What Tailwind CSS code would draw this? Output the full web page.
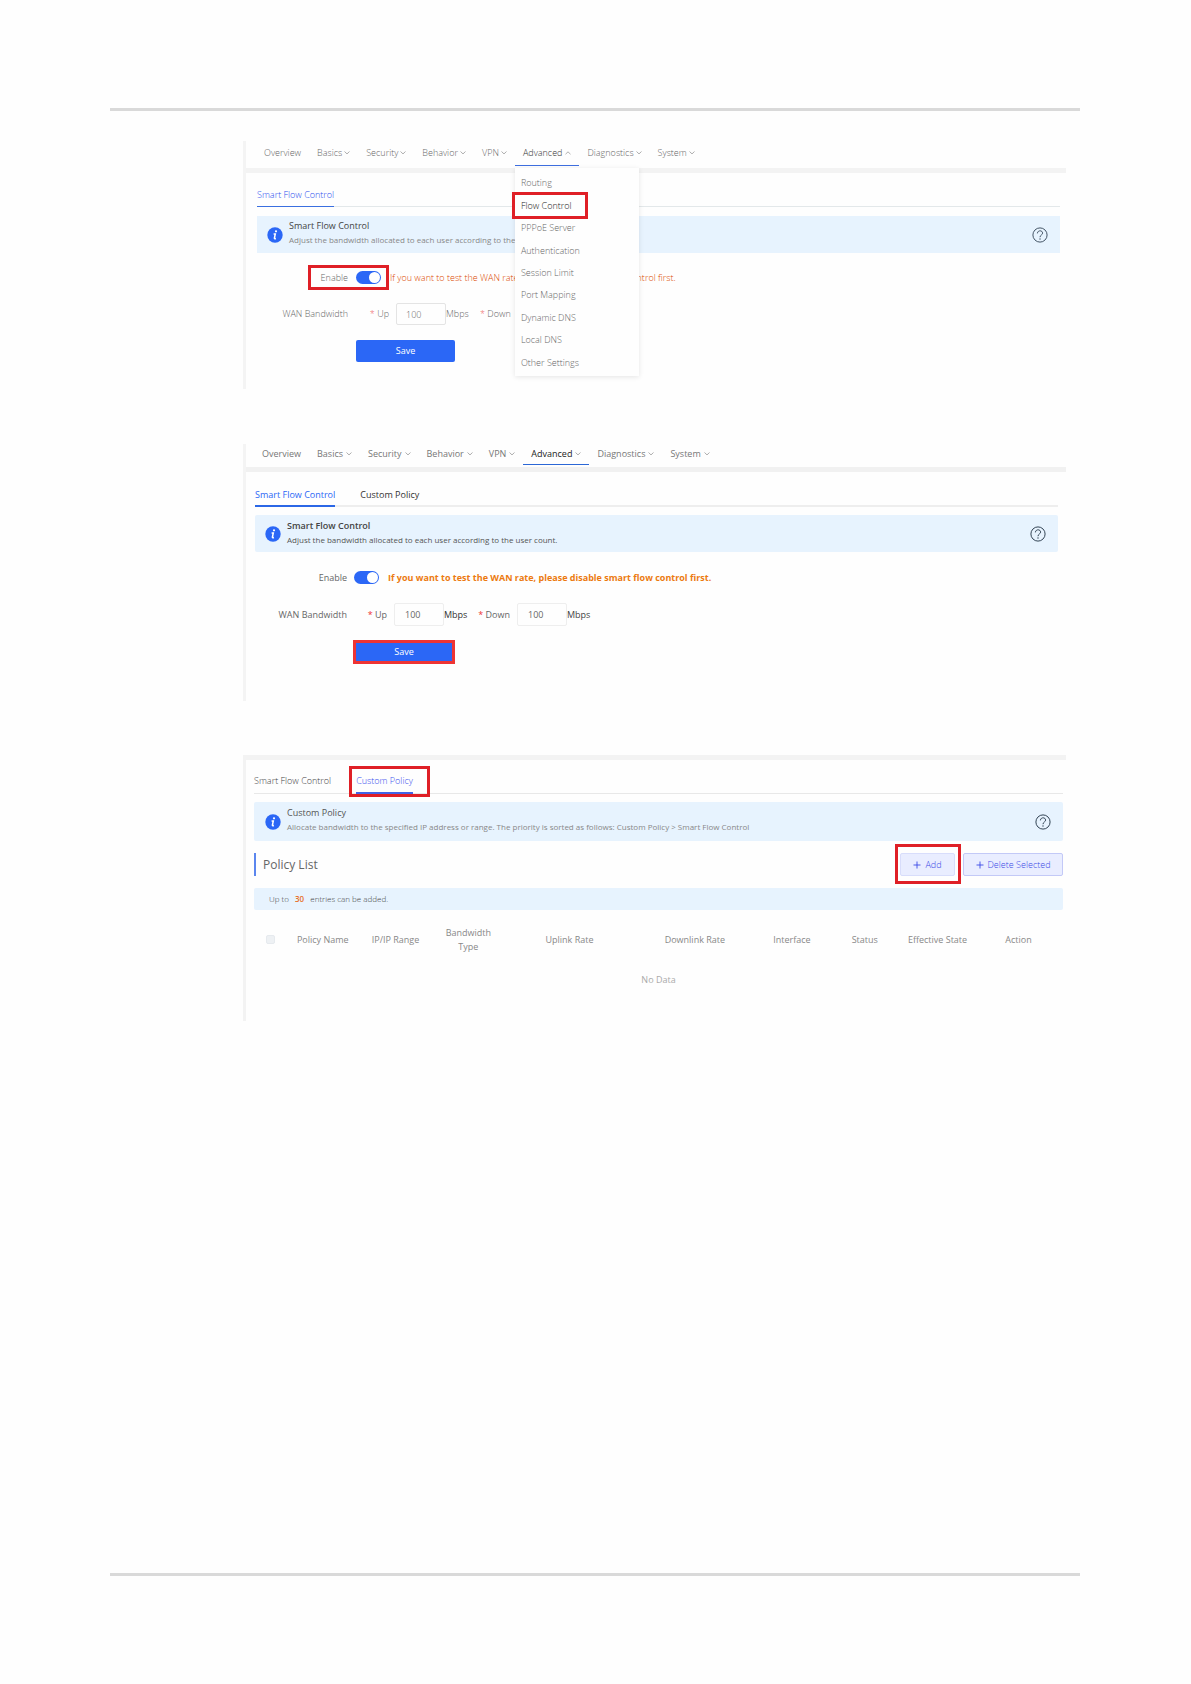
<!DOCTYPE html>
<html lang="en">
<head>
    <meta charset="UTF-8">
    <meta name="viewport" content="width=device-width, initial-scale=1.0">
    <title>Flow Control</title>
    <script src="https://cdn.jsdelivr.net/npm/@tailwindcss/browser@4"></script>
</head>
<body class="flex min-h-screen flex-col bg-[#fefefe] pt-[108px] pr-[111px] pb-[108px] pl-[110px] font-['Open_Sans',sans-serif] text-[9px] leading-3 text-[#666]">
    <svg class="hidden">
        <symbol id="down" viewBox="0 0 6 6"><path d="M.5 1.5 3 3.9 5.5 1.5" fill="none" stroke="#999" stroke-width=".8"/></symbol>
        <symbol id="up" viewBox="0 0 6 6"><path d="M.5 4.2 3 1.8 5.5 4.2" fill="none" stroke="#999" stroke-width=".8"/></symbol>
        <symbol id="plus" viewBox="0 0 8 8"><path d="M4 .5v7M.5 4h7" fill="none" stroke="currentColor" stroke-width=".9"/></symbol>
        <symbol id="info" viewBox="0 0 16 16">
            <circle cx="8" cy="8" r="7.7" fill="#2b67f6"/>
            <circle cx="9" cy="4.3" r="1.1" fill="#fff"/>
            <path d="M6.6 6.9h1.7L7.4 11.2q0 .8 1.5.3" fill="none" stroke="#fff" stroke-width="1.5"/>
        </symbol>
        <symbol id="help" viewBox="0 0 16 16">
            <circle cx="8" cy="8" r="7.1" fill="none" stroke="currentColor" stroke-width="1"/>
            <path d="M5.4 6.4C5.4 3 10.6 3 10.6 6.1 10.6 8 8 8 8 10.2" fill="none" stroke="currentColor" stroke-width="1"/>
            <circle cx="8" cy="12" r=".7" fill="currentColor"/>
        </symbol>
    </svg>

    <hr class="h-[3px] border-0 bg-[#d9d9d9]">

    <main class="mr-[14px] ml-[133px]">
        <!-- Step 1: open the menu -->
        <section class="mt-[30px] h-[248px] border-l-3 border-[#f4f4f4] font-light text-[#666]">
            <nav class="flex h-8 items-start border-b-5 border-[#f3f3f3] pl-[10px]">
                <a href="#" class="flex h-6 items-center px-2">Overview</a>
                <a href="#" class="flex h-6 items-center gap-[2px] px-2">Basics <svg class="size-[6px]"><use href="#down"/></svg></a>
                <a href="#" class="flex h-6 items-center gap-[2px] px-2">Security <svg class="size-[6px]"><use href="#down"/></svg></a>
                <a href="#" class="flex h-6 items-center gap-[2px] px-2">Behavior <svg class="size-[6px]"><use href="#down"/></svg></a>
                <a href="#" class="flex h-6 items-center gap-[2px] px-2">VPN <svg class="size-[6px]"><use href="#down"/></svg></a>
                <div class="relative">
                    <a href="#" class="flex h-[25px] items-center gap-[3px] border-b border-[#3f6fe0] px-2 text-[#333]">Advanced <svg class="size-[6px]"><use href="#up"/></svg></a>
                    <ul class="absolute top-[27px] left-0 z-10 flex h-[208px] w-[124px] flex-col bg-[#fefefe] pt-1 pb-[2px] shadow-[0_1px_5px_rgba(0,0,0,0.1)]">
                        <li class="flex flex-1 items-center px-[6px]"><a href="#">Routing</a></li>
                        <li class="relative flex flex-1 items-center px-[6px] text-[#222]"><a href="#">Flow Control</a><span class="absolute -top-[2px] -bottom-[2px] -left-[3px] w-[76px] border-3 border-[#df1f26]"></span></li>
                        <li class="flex flex-1 items-center px-[6px]"><a href="#">PPPoE Server</a></li>
                        <li class="flex flex-1 items-center px-[6px]"><a href="#">Authentication</a></li>
                        <li class="flex flex-1 items-center px-[6px]"><a href="#">Session Limit</a></li>
                        <li class="flex flex-1 items-center px-[6px]"><a href="#">Port Mapping</a></li>
                        <li class="flex flex-1 items-center px-[6px]"><a href="#">Dynamic DNS</a></li>
                        <li class="flex flex-1 items-center px-[6px]"><a href="#">Local DNS</a></li>
                        <li class="flex flex-1 items-center px-[6px]"><a href="#">Other Settings</a></li>
                    </ul>
                </div>
                <a href="#" class="flex h-6 items-center gap-[2px] px-2">Diagnostics <svg class="size-[6px]"><use href="#down"/></svg></a>
                <a href="#" class="flex h-6 items-center gap-[2px] px-2">System <svg class="size-[6px]"><use href="#down"/></svg></a>
            </nav>
            <div class="mr-[6px] ml-[11px]">
                <div class="flex h-[34px] items-end border-b border-[#e3e8ea]">
                    <a href="#" class="-mb-px border-b border-[#3a6fe0] pb-[5px] text-[#2b50ee]">Smart Flow Control</a>
                </div>
                <div class="mt-[9px] flex h-[37px] items-center bg-[#e7f3fe] pr-3 pl-[10px]">
                    <svg class="size-4"><use href="#info"/></svg>
                    <div class="ml-[6px] pb-[3px]">
                        <h2 class="leading-[14px] font-normal text-[#444]">Smart Flow Control</h2>
                        <p class="text-[8px] leading-[14px] font-normal text-[#888]">Adjust the bandwidth allocated to each user according to the user count.</p>
                    </div>
                    <button aria-label="Help" class="ml-auto text-[#456]"><svg class="size-4"><use href="#help"/></svg></button>
                </div>
                <form>
                    <div class="mt-3 flex h-[25px] items-center">
                        <div class="relative ml-[51px] flex h-full w-[81px] items-center justify-end gap-2 pr-2">
                            <label for="enable1">Enable</label>
                            <input id="enable1" type="checkbox" checked class="h-[13px] w-[25px] appearance-none rounded-full bg-[#2b67f6] before:mt-px before:ml-[13px] before:block before:size-[11px] before:rounded-full before:bg-white">
                            <span class="absolute inset-0 border-3 border-[#df1f26]"></span>
                        </div>
                        <p class="ml-px text-[#dc4a00]">If you want to test the WAN rate, please disable smart flow control first.</p>
                    </div>
                    <div class="mt-[13px] flex h-[22px] items-center">
                        <span class="w-[91px] text-right">WAN Bandwidth</span>
                        <label for="up1" class="w-[41px] text-right"><span class="text-[#e66]">*</span> Up</label>
                        <input id="up1" value="100" class="ml-[7px] h-[22px] w-[50px] rounded-xs border border-[#e4e4e4] pl-[9px] text-[9px]">
                        <span class="w-[22px]">Mbps</span>
                        <span class="ml-3"><span class="text-[#e66]">*</span> Down</span>
                    </div>
                    <button type="button" class="mt-[15px] ml-[99px] block h-[22px] w-[99px] rounded-xs bg-[#2b67f6] font-normal text-white">Save</button>
                </form>
            </div>
        </section>

        <!-- Step 2: save -->
        <section class="mt-[55px] h-[257px] border-l-3 border-[#f4f4f4] text-[#777]">
            <nav class="flex h-[28px] items-start border-b-5 border-[#f1f1f1] pl-[8px]">
                <a href="#" class="px-2 py-1">Overview</a>
                <a href="#" class="flex items-center gap-[3px] px-2 py-1">Basics <svg class="size-[6px]"><use href="#down"/></svg></a>
                <a href="#" class="flex items-center gap-[3px] px-2 py-1">Security <svg class="size-[6px]"><use href="#down"/></svg></a>
                <a href="#" class="flex items-center gap-[3px] px-2 py-1">Behavior <svg class="size-[6px]"><use href="#down"/></svg></a>
                <a href="#" class="flex items-center gap-[3px] px-2 py-1">VPN <svg class="size-[6px]"><use href="#down"/></svg></a>
                <a href="#" class="flex items-center gap-[3px] border-b border-[#2b67d6] px-2 py-1 text-[#222]">Advanced <svg class="size-[6px]"><use href="#down"/></svg></a>
                <a href="#" class="flex items-center gap-[3px] px-2 py-1">Diagnostics <svg class="size-[6px]"><use href="#down"/></svg></a>
                <a href="#" class="flex items-center gap-[3px] px-2 py-1">System <svg class="size-[6px]"><use href="#down"/></svg></a>
            </nav>
            <div class="mr-2 ml-[9px]">
                <div class="flex h-[35px] items-end gap-[25px] border-b-2 border-[#eee]">
                    <a href="#" class="-mb-[2px] border-b-2 border-[#2b67e6] pb-1 text-[#2b67f6]">Smart Flow Control</a>
                    <a href="#" class="-mb-[2px] border-b-2 border-transparent pb-1 text-[#333]">Custom Policy</a>
                </div>
                <div class="mt-2 flex h-[37px] items-center rounded-xs bg-[#e7f3fe] pr-3 pl-[10px]">
                    <svg class="size-4"><use href="#info"/></svg>
                    <div class="ml-[6px] pb-px">
                        <h2 class="leading-[14px] font-semibold text-[#444]">Smart Flow Control</h2>
                        <p class="text-[8px] leading-[14px] text-[#555]">Adjust the bandwidth allocated to each user according to the user count.</p>
                    </div>
                    <button aria-label="Help" class="ml-auto text-[#345]"><svg class="size-4"><use href="#help"/></svg></button>
                </div>
                <form class="text-[#666]">
                    <div class="mt-[19px] flex h-[13px] items-center">
                        <label for="enable2" class="w-[92px] text-right">Enable</label>
                        <input id="enable2" type="checkbox" checked class="ml-[7px] h-[13px] w-[25px] appearance-none rounded-full bg-[#2b67f6] before:mt-px before:ml-[13px] before:block before:size-[11px] before:rounded-full before:bg-white">
                        <p class="ml-[9px] font-bold text-[#ec7a10]">If you want to test the WAN rate, please disable smart flow control first.</p>
                    </div>
                    <div class="mt-[19px] flex h-[23px] items-center">
                        <span class="w-[92px] text-right">WAN Bandwidth</span>
                        <label for="up2" class="w-[40px] text-right"><span class="text-[#e33]">*</span> Up</label>
                        <input id="up2" value="100" class="ml-[7px] h-[23px] w-[50px] rounded-xs border border-[#eee] pl-[10px] text-[9px]">
                        <span class="w-[24px] text-[#333]">Mbps</span>
                        <label for="down2" class="w-[42px] text-right"><span class="text-[#e33]">*</span> Down</label>
                        <input id="down2" value="100" class="ml-[7px] h-[23px] w-[50px] rounded-xs border border-[#eee] pl-[10px] text-[9px]">
                        <span class="text-[#444]">Mbps</span>
                    </div>
                    <button type="button" class="mt-[14px] ml-[98px] block h-[24px] w-[102px] border-3 border-[#ee3434] bg-[#2b67f6] text-white">Save</button>
                </form>
            </div>
        </section>

        <!-- Step 3: custom policies -->
        <section class="mt-[54px] h-[266px] border-t-5 border-l-3 border-[#f3f3f3] font-light text-[#444]">
            <div class="mr-[3px] ml-2">
                <div class="flex h-[34px] items-end gap-[25px] border-b border-[#e8e8e8]">
                    <a href="#" class="-mb-px border-b-2 border-transparent pb-[5px]">Smart Flow Control</a>
                    <a href="#" class="relative -mb-px border-b-2 border-[#4263e6] pb-[5px] text-[#3a50ee]">Custom Policy<span class="absolute -top-[9px] -right-[17px] -bottom-[5px] -left-[7px] border-3 border-[#df1f26]"></span></a>
                </div>
                <div class="mt-2 flex h-[39px] items-center rounded-xs bg-[#e7f3fe] pr-3 pl-[11px]">
                    <svg class="size-4"><use href="#info"/></svg>
                    <div class="ml-[6px] pb-[3px]">
                        <h2 class="leading-[14px] font-normal text-[#555]">Custom Policy</h2>
                        <p class="text-[8px] leading-[14px] font-normal text-[#888]">Allocate bandwidth to the specified IP address or range. The priority is sorted as follows: Custom Policy &gt; Smart Flow Control</p>
                    </div>
                    <button aria-label="Help" class="ml-auto text-[#345]"><svg class="size-4"><use href="#help"/></svg></button>
                </div>
                <div class="mt-3 flex h-[23px] items-center">
                    <h2 class="flex h-full items-center border-l-2 border-[#5b86ee] pl-[7px] text-[12px] font-normal text-[#666]">Policy List</h2>
                    <div class="relative ml-auto">
                        <button class="flex h-[23px] w-[55px] items-center justify-center gap-1 rounded-xs border border-[#d8ddfb] bg-[#e9edff] text-[#3a4ae6]"><svg class="size-2"><use href="#plus"/></svg>Add</button>
                        <span class="absolute -top-[9px] -right-[6px] -bottom-[8px] -left-[5px] border-3 border-[#df1f26]"></span>
                    </div>
                    <button class="ml-2 flex h-[23px] w-[100px] items-center justify-center gap-1 rounded-xs border border-[#c3c9f7] bg-[#e9edff] text-[#3a4ae6]"><svg class="size-2"><use href="#plus"/></svg>Delete Selected</button>
                </div>
                <p class="mt-3 h-[22px] rounded-xs bg-[#e7f3fe] pl-[15px] text-[8px] leading-[22px]">Up to <b class="mx-1 font-semibold text-[#e8702a]">30</b> entries can be added.</p>
                <table class="mt-[13px] w-full table-fixed text-center font-normal text-[#888]">
                    <thead>
                        <tr class="h-[33px] leading-[14px]">
                            <th class="w-[4%] p-0"><input type="checkbox" aria-label="Select all" class="mx-auto block size-[9px] appearance-none rounded-xs border border-[#e6eaee] bg-[#eef1f4]"></th>
                            <th class="w-[9%] p-0 font-normal">Policy Name</th>
                            <th class="w-[9%] p-0 font-normal">IP/IP Range</th>
                            <th class="w-[9%] p-0 font-normal">Bandwidth<br>Type</th>
                            <th class="w-[16%] p-0 font-normal">Uplink Rate</th>
                            <th class="w-[15%] p-0 font-normal">Downlink Rate</th>
                            <th class="w-[9%] p-0 font-normal">Interface</th>
                            <th class="w-[9%] p-0 font-normal">Status</th>
                            <th class="w-[9%] p-0 font-normal">Effective State</th>
                            <th class="w-[11%] p-0 font-normal">Action</th>
                        </tr>
                    </thead>
                    <tbody>
                        <tr class="h-[47px] text-[#aaa]"><td colspan="10">No Data</td></tr>
                    </tbody>
                </table>
            </div>
        </section>
    </main>

    <hr class="mt-auto h-[3px] border-0 bg-[#d9d9d9]">
</body>
</html>
